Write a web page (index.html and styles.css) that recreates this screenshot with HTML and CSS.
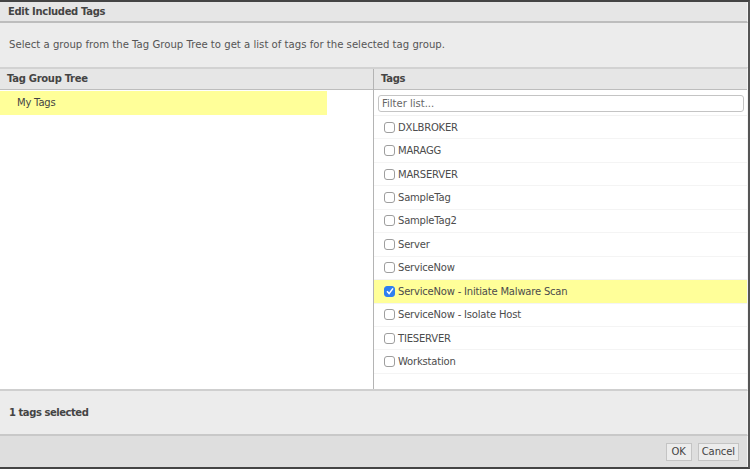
FILE: index.html
```html
<!DOCTYPE html>
<html lang="en">
<head>
<meta charset="utf-8">
<title>Edit Included Tags</title>
<link rel="stylesheet" href="styles.css">
</head>
<body>
<div class="dialog">
  <header class="title">Edit Included Tags</header>
  <p class="intro">Select a group from the Tag Group Tree to get a list of tags for the selected tag group.</p>
  <main class="columns">
    <section class="tree">
      <h2 class="colhead">Tag Group Tree</h2>
      <div class="tree-item">My Tags</div>
    </section>
    <section class="tags">
      <h2 class="colhead">Tags</h2>
      <div class="filter"><input class="filter-input" type="text" placeholder="Filter list..."></div>
      <ul class="list">
        <li class="row"><span class="box"></span>DXLBROKER</li>
        <li class="row"><span class="box"></span>MARAGG</li>
        <li class="row"><span class="box"></span>MARSERVER</li>
        <li class="row"><span class="box"></span>SampleTag</li>
        <li class="row"><span class="box"></span>SampleTag2</li>
        <li class="row"><span class="box"></span>Server</li>
        <li class="row"><span class="box"></span>ServiceNow</li>
        <li class="row selected"><span class="box checked"><svg viewBox="0 0 12 12" width="12" height="12"><path d="M3 6.3 L5.1 8.6 L9 3.4" fill="none" stroke="#fff" stroke-width="1.5"/></svg></span>ServiceNow - Initiate Malware Scan</li>
        <li class="row"><span class="box"></span>ServiceNow - Isolate Host</li>
        <li class="row"><span class="box"></span>TIESERVER</li>
        <li class="row"><span class="box"></span>Workstation</li>
      </ul>
    </section>
  </main>
  <div class="status">1 tags selected</div>
  <footer class="actions">
    <button class="btn" type="button">OK</button>
    <button class="btn" type="button">Cancel</button>
  </footer>
</div>
</body>
</html>
```
FILE: styles.css
```css
* { box-sizing: border-box; }
html, body { margin: 0; padding: 0; }
body {
  width: 750px;
  height: 469px;
  overflow: hidden;
  background: #fff;
  font-family: "DejaVu Sans", sans-serif;
  font-size: 10px;
  letter-spacing: -0.2px;
  color: #4a4a4a;
}
.dialog {
  width: 750px;
  height: 469px;
  display: flex;
  flex-direction: column;
  border-top: 2px solid #444;
  border-bottom: 2px solid #444;
  border-right: 2px solid #555;
}
.title {
  height: 21px;
  flex: none;
  padding: 0 8px;
  line-height: 19px;
  letter-spacing: -0.32px;
  font-weight: 700;
  color: #444;
  background: #e6e6e6;
  border-bottom: 2px solid #bdbdbd;
  border-right: 1px solid #f4f4f4;
}
.intro {
  margin: 0;
  height: 44px;
  flex: none;
  padding: 0 9px;
  font-size: 10.15px;
  letter-spacing: 0;
  line-height: 44px;
  background: #ececec;
  color: #555;
  border-right: 1px solid #f4f4f4;
}
.columns {
  height: 324px;
  flex: none;
  display: flex;
  background: #fff;
  border-top: 2px solid #d2d2d2;
  border-bottom: 2px solid #cfcfcf;
  border-right: 1px solid #f4f4f4;
}
.tree {
  width: 374px;
  flex: none;
  border-right: 1px solid #b4b4b4;
}
.tags { flex: 1; min-width: 0; }
.colhead {
  margin: 0;
  height: 21px;
  padding: 0 7px;
  font-size: 10px;
  line-height: 20px;
  font-weight: 700;
  letter-spacing: -0.3px;
  color: #444;
  background: #e6e6e6;
  border-bottom: 1px solid #bdbdbd;
}
.tree-item {
  width: 327px;
  height: 24px;
  margin-top: 1px;
  padding-left: 17px;
  line-height: 24px;
  background: #ffff99;
  color: #444;
}
.filter { height: 26px; padding: 5px 3px 0 4px; border-bottom: 1px solid #f2f2f2; }
.filter-input {
  display: block;
  width: 100%;
  height: 17px;
  padding: 0 3px;
  border: 1px solid #c4c4c4;
  border-radius: 3px;
  background: #fff;
  font-family: "DejaVu Sans", sans-serif;
  font-size: 10px;
  color: #555;
  outline: none;
}
.filter-input::placeholder { color: #666; opacity: 1; }
.list { margin: 0; padding: 0; list-style: none; }
.row {
  height: 23.45px;
  display: flex;
  align-items: center;
  padding-left: 10px;
  gap: 3px;
  border-bottom: 1px solid #f4f4f4;
  color: #4c4c4c;
}
.row.selected { background: #ffff99; }
.box {
  width: 11px;
  height: 11px;
  flex: none;
  display: block;
  border: 1px solid #9e9e9e;
  border-radius: 3px;
  background: #fff;
  position: relative;
}
.box.checked { background: #2f7ff0; border-color: #2f7ff0; }
.box svg { position: absolute; left: -1.5px; top: -1.5px; display: block; }
.status {
  height: 45px;
  flex: none;
  padding: 0 9px;
  letter-spacing: -0.45px;
  line-height: 43px;
  font-weight: 700;
  color: #444;
  background: #ececec;
  border-bottom: 2px solid #c8c8c8;
  border-right: 1px solid #f4f4f4;
}
.actions {
  flex: 1;
  min-height: 0;
  display: flex;
  justify-content: flex-end;
  align-items: center;
  gap: 6px;
  padding: 0 8px 0 0;
  background: #dedede;
  border-right: 1px solid #f4f4f4;
}
.btn {
  height: 18px;
  padding: 0 3px;
  min-width: 26px;
  border: 1px solid #c4c4c4;
  background: #ececec;
  font-family: "DejaVu Sans", sans-serif;
  font-size: 10px;
  letter-spacing: -0.1px;
  color: #444;
}
```
